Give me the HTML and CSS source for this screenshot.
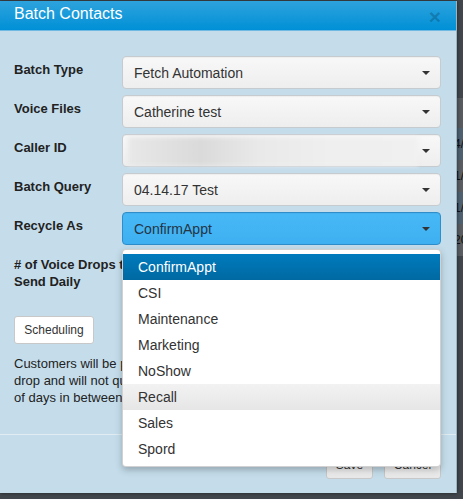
FILE: index.html
```html
<!DOCTYPE html>
<html>
<head>
<meta charset="utf-8">
<link rel="stylesheet" href="styles.css">
</head>
<body>
<div class="page">
  <div class="bg-table">
    <div class="bg-row head"></div>
    <div class="bg-row alt">4/14/17</div>
    <div class="bg-row">1/11/17</div>
    <div class="bg-row alt">1/11/17</div>
    <div class="bg-row">2017</div>
  </div>
</div>
<div class="modal">
  <div class="modal-header">
    <h4 class="modal-title">Batch Contacts</h4>
    <span class="close">×</span>
  </div>
  <div class="modal-body">
    <div class="form-row">
      <label class="form-label">Batch Type</label>
      <div class="select"><span class="select-text">Fetch Automation</span><i class="caret"></i></div>
    </div>
    <div class="form-row">
      <label class="form-label">Voice Files</label>
      <div class="select"><span class="select-text">Catherine test</span><i class="caret"></i></div>
    </div>
    <div class="form-row">
      <label class="form-label">Caller ID</label>
      <div class="select"><span class="blurred"></span><i class="caret"></i></div>
    </div>
    <div class="form-row">
      <label class="form-label">Batch Query</label>
      <div class="select"><span class="select-text">04.14.17 Test</span><i class="caret"></i></div>
    </div>
    <div class="form-row">
      <label class="form-label">Recycle As</label>
      <div class="select select-open"><span class="select-text">ConfirmAppt</span><i class="caret"></i>
        <ul class="dropdown">
          <li class="item active">ConfirmAppt</li>
          <li class="item">CSI</li>
          <li class="item">Maintenance</li>
          <li class="item">Marketing</li>
          <li class="item">NoShow</li>
          <li class="item hover">Recall</li>
          <li class="item">Sales</li>
          <li class="item">Spord</li>
        </ul>
      </div>
    </div>
    <div class="form-row tall">
      <label class="form-label wide"># of Voice Drops to<br>Send Daily</label>
      <div class="select"><span class="select-text">100</span></div>
    </div>
    <button class="btn btn-sched">Scheduling</button>
    <p class="note">Customers will be processed according to the rules of each voice<br>drop and will not queue again for the specified number<br>of days in between drops.</p>
  </div>
  <div class="modal-footer">
    <button class="btn btn-foot save">Save</button>
    <button class="btn btn-foot cancel">Cancel</button>
  </div>
</div>
</body>
</html>
```
FILE: styles.css
```css
* { box-sizing: border-box; }
html, body {
  margin: 0;
  padding: 0;
  width: 463px;
  height: 499px;
  overflow: hidden;
  background: #41474d;
  font-family: "Liberation Sans", Arial, sans-serif;
}
.page {
  width: 463px;
  height: 499px;
  padding-top: 98px;
}
.bg-table {
  margin-left: 454px;
}
.bg-row {
  height: 32px;
  line-height: 32px;
  font-size: 12px;
  color: #111;
  white-space: nowrap;
  overflow: hidden;
  background: #5a5e62;
}
.bg-row.head { height: 30px; background: #575c61; }
.bg-row.alt { background: #4f6171; }

.modal {
  position: absolute;
  top: 1px;
  left: 0;
  width: 457px;
  height: 492px;
  background: #c5ddeb;
  border-right: 1px solid #9bb3c3;
  box-shadow: 0 0 4px rgba(0,0,0,0.5);
  display: flex;
  flex-direction: column;
}
.modal-header {
  height: 30px;
  background: linear-gradient(#2ea3dd, #0090d7);
  border-bottom: 1px solid #6fb9e2;
  display: flex;
  justify-content: space-between;
  align-items: flex-start;
  padding: 3px 14px 0 14px;
}
.modal-title {
  margin: 0;
  font-size: 16px;
  line-height: 20px;
  font-weight: normal;
  color: #fff;
}
.close {
  font-size: 21px;
  font-weight: bold;
  line-height: 24px;
  margin-top: 1px;
  color: rgba(0,0,0,0.2);
  margin-right: 1px;
}
.modal-body {
  flex: 1;
  padding: 25px 15px 0 14px;
}
.form-row {
  display: flex;
  height: 33px;
  margin-bottom: 6px;
}
.form-row.tall {
  height: 40px;
  margin-bottom: 25px;
}
.form-label {
  width: 108px;
  flex: none;
  font-size: 13px;
  font-weight: bold;
  line-height: 17px;
  padding-top: 5px;
  color: #222;
  white-space: nowrap;
}
.select {
  position: relative;
  flex: 1;
  height: 33px;
  border: 1px solid #c6cbcf;
  border-radius: 4px;
  background: linear-gradient(#f8f8f8, #eeeeee);
  box-shadow: inset 0 1px 1px rgba(0,0,0,0.04);
  display: flex;
  align-items: center;
  justify-content: space-between;
  padding: 1px 10px 0 11px;
}
.select-text {
  font-size: 14px;
  color: #333;
  line-height: 30px;
}
.select-open {
  background: linear-gradient(#48b8f6, #3eb0f1);
  border-color: #2f8ec9;
}
.select-open .select-text { color: #243444; }
.blurred {
  display: block;
  height: 29px;
  width: 290px;
  margin-left: -6px;
  background: linear-gradient(90deg, #e8e8e8 0, #dadada 25%, #e9e9e9 45%, #efefef 70%, #f0f0f0 100%);
  filter: blur(2px);
}
.caret {
  display: block;
  width: 0;
  height: 0;
  border-top: 4px solid #333;
  border-left: 4px solid transparent;
  border-right: 4px solid transparent;
}
.dropdown {
  position: absolute;
  top: 36px;
  left: -1px;
  right: -1px;
  margin: 0;
  padding: 4px 0 4px 0;
  list-style: none;
  background: #fff;
  border: 1px solid rgba(0,0,0,0.18);
  border-radius: 4px;
  box-shadow: 0 3px 7px rgba(0,0,0,0.25);
  z-index: 10;
}
.item {
  height: 26px;
  line-height: 26px;
  padding-left: 15px;
  font-size: 14px;
  color: #333;
}
.item.active {
  background: linear-gradient(#007bbd, #0069a2);
  color: #fff;
}
.item.hover {
  background: linear-gradient(#f2f2f2, #e6e6e6);
}
.btn {
  font-family: "Liberation Sans", Arial, sans-serif;
  font-size: 12px;
  color: #333;
  height: 28px;
  border: 1px solid #c8c8c8;
  border-radius: 3px;
  padding: 0;
  margin: 0;
}
.btn-sched {
  display: block;
  width: 80px;
  background: #fff;
}
.note {
  margin: 11px 0 0 0;
  font-size: 13px;
  line-height: 17px;
  color: #222;
  white-space: nowrap;
}
.modal-footer {
  border-top: 1px solid #e0ebf2;
  padding: 16px 15px 14px 15px;
  display: flex;
  justify-content: flex-end;
  gap: 11px;
}
.btn-foot {
  background: linear-gradient(#ffffff, #e8e8e8);
}
.save { width: 47px; }
.cancel { width: 57px; }
```
